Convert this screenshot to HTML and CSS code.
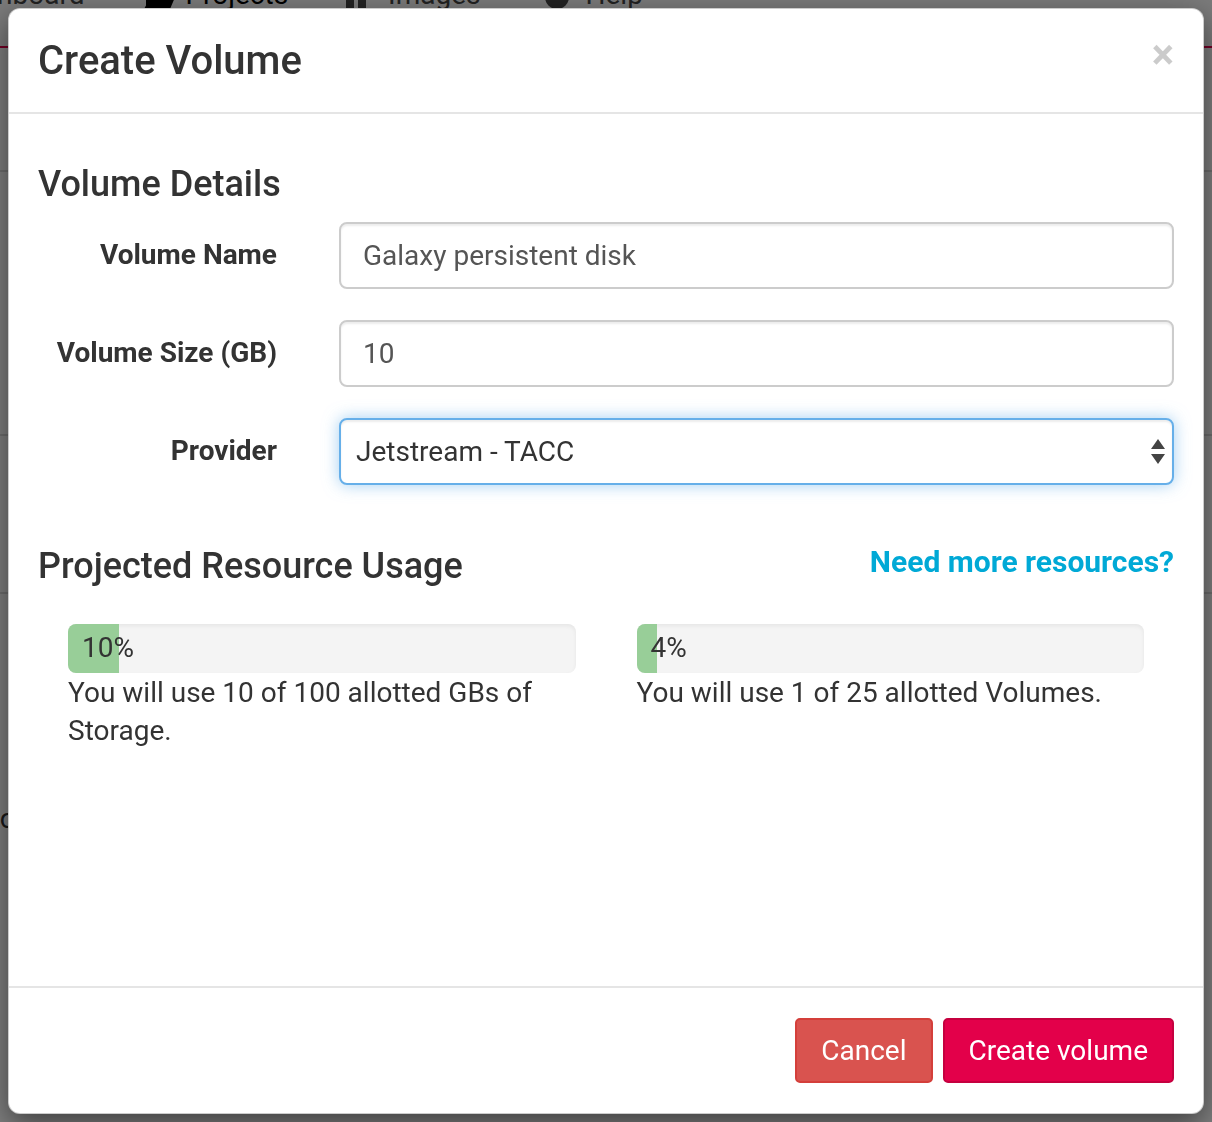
FILE: index.html
```html
<!DOCTYPE html>
<html lang="en">
<head>
<meta charset="utf-8">
<title>Create Volume</title>
<link rel="stylesheet" href="styles.css">
</head>
<body>
  <div class="page">
    <nav class="topnav">
      <a class="nav-item">Dashboard</a>
      <a class="nav-item active">
        <svg class="nav-icon" width="32" height="32" viewBox="0 0 32 32"><path d="M2 8h10l3 3h13v5H8L2 28z M8 16h24l-6 14H0z" fill="#000"/></svg>
        Projects
      </a>
      <a class="nav-item img-item">
        <svg class="nav-icon" width="22" height="32" viewBox="0 0 22 32"><rect x="0" y="2" width="8" height="28" fill="#444"/><rect x="12" y="2" width="8" height="28" fill="#444"/></svg>
        Images
      </a>
      <a class="nav-item help-item">
        <svg class="nav-icon" width="24" height="32" viewBox="0 0 24 32"><circle cx="12" cy="18" r="12" fill="#444"/></svg>
        Help
      </a>
    </nav>
    <div class="page-content">
      <div class="row-block r1"></div>
      <div class="row-block r2"></div>
      <div class="row-block r3"></div>
      <p class="bg-text t1">po, about your project</p>
      <p class="bg-text t2">The volume</p>
      <p class="bg-text t3">At last.</p>
    </div>
  </div>

  <div class="backdrop"></div>

  <div class="modal" role="dialog" aria-labelledby="modal-title">
    <div class="modal-header">
      <h4 class="modal-title" id="modal-title">Create Volume</h4>
      <button class="close" type="button" aria-label="Close">×</button>
    </div>

    <div class="modal-body">
      <h3 class="section-title">Volume Details</h3>
      <form class="form-horizontal">
        <div class="form-group">
          <label class="control-label" for="vol-name">Volume Name</label>
          <input class="form-control" id="vol-name" type="text" value="Galaxy persistent disk">
        </div>
        <div class="form-group">
          <label class="control-label" for="vol-size">Volume Size (GB)</label>
          <input class="form-control" id="vol-size" type="text" value="10">
        </div>
        <div class="form-group">
          <label class="control-label" for="vol-provider">Provider</label>
          <div class="select-wrap">
            <select class="form-control select-focus" id="vol-provider">
              <option>Jetstream - TACC</option>
            </select>
            <svg class="select-arrows" width="14" height="26" viewBox="0 0 14 26"><path d="M7 0L14 10H0z M0 15h14L7 25z" fill="#444"/></svg>
          </div>
        </div>
      </form>

      <div class="usage-head">
        <h3 class="section-title usage-title">Projected Resource Usage</h3>
        <a class="more-link" href="#">Need more resources?</a>
      </div>

      <div class="usage-row">
        <div class="usage-col">
          <div class="progress">
            <div class="progress-bar" style="width:10%"></div>
            <span class="progress-label">10%</span>
          </div>
          <p class="usage-text">You will use 10 of 100 allotted GBs of Storage.</p>
        </div>
        <div class="usage-col">
          <div class="progress">
            <div class="progress-bar" style="width:4%"></div>
            <span class="progress-label">4%</span>
          </div>
          <p class="usage-text">You will use 1 of 25 allotted Volumes.</p>
        </div>
      </div>
    </div>

    <div class="modal-footer">
      <button class="btn btn-cancel" type="button">Cancel</button>
      <button class="btn btn-primary" type="button">Create volume</button>
    </div>
  </div>
</body>
</html>
```

FILE: styles.css
```css
* { box-sizing: border-box; }

html, body {
  margin: 0;
  padding: 0;
}

body {
  width: 1212px;
  height: 1122px;
  overflow: hidden;
  position: relative;
  font-family: Roboto, "Helvetica Neue", Arial, sans-serif;
  color: #333;
  background: #fff;
}

/* ---------- background page ---------- */
.page {
  height: 100%;
}

.topnav {
  display: flex;
  align-items: flex-start;
  height: 73px;
  margin-top: -25px;
  margin-left: -51px;
  background: #f6f6f6;
  border-bottom: 2px solid #e4004a;
  font-size: 28px;
  line-height: 40px;
}

.nav-item {
  display: flex;
  align-items: flex-end;
  gap: 9px;
  color: #444;
  padding: 0 0 0 60px;
}

.nav-item:first-child { padding-left: 0; }

.img-item { gap: 20px; padding-left: 58px; }
.help-item { gap: 17px; padding-left: 64px; }

.nav-item.active {
  color: #000;
}

.nav-icon {
  flex: none;
  margin-bottom: 4px;
}

.page-content {
  margin-left: -30px;
}

.row-block {
  border-bottom: 2px solid #ddd;
}
.r1 { height: 124px; }
.r2 { height: 264px; }
.r3 { height: 158px; }

.bg-text {
  margin: 0;
  font-size: 28px;
  line-height: 40px;
}
.t1 { margin-top: 205px; margin-left: 14px; }
.t2 { margin-top: 105px; margin-left: -120px; }
.t3 { margin-top: 110px; margin-left: -80px; }

.backdrop {
  position: fixed;
  inset: 0;
  background: rgba(0, 0, 0, 0.5);
}

/* ---------- modal ---------- */
.modal {
  position: absolute;
  left: 8px;
  top: 8px;
  width: 1196px;
  height: 1106px;
  display: flex;
  flex-direction: column;
  background: #fff;
  border: 1px solid rgba(0, 0, 0, 0.2);
  border-radius: 12px;
  box-shadow: 0 10px 30px rgba(0, 0, 0, 0.5);
}

.modal-header {
  display: flex;
  justify-content: space-between;
  align-items: flex-start;
  padding: 30px 29px 29px;
  border-bottom: 2px solid #e5e5e5;
}

.modal-title {
  margin: 0;
  font-size: 40px;
  line-height: 44px;
  font-weight: 500;
  color: #333;
}

.close {
  margin: -5px 0 0;
  padding: 0;
  border: 0;
  background: none;
  font-family: inherit;
  font-size: 42px;
  line-height: 42px;
  font-weight: 700;
  color: #000;
  opacity: 0.2;
  cursor: pointer;
}

.modal-body {
  flex: 1;
  padding: 30px 29px;
}

.section-title {
  margin: 20px 0 18px;
  font-size: 36px;
  line-height: 40px;
  font-weight: 500;
  color: #333;
}

.form-horizontal {
  margin: 0;
}

.form-group {
  display: grid;
  grid-template-columns: 239px 1fr;
  column-gap: 62px;
  align-items: center;
  margin-bottom: 31px;
}

.form-group:last-child {
  margin-bottom: 0;
}

.control-label {
  text-align: right;
  font-size: 28px;
  line-height: 40px;
  font-weight: 700;
  color: #333;
  margin-top: -2px;
}

.form-control {
  display: block;
  width: 100%;
  height: 67px;
  padding: 0 22px;
  font-family: inherit;
  font-size: 28px;
  color: #555;
  background: #fff;
  border: 2px solid #ccc;
  border-radius: 8px;
  box-shadow: inset 0 2px 2px rgba(0, 0, 0, 0.075);
  outline: none;
}

.select-wrap {
  position: relative;
}

.select-focus {
  appearance: none;
  -webkit-appearance: none;
  padding-left: 15px;
  color: #333;
  border-color: #66afe9;
  box-shadow: inset 0 2px 2px rgba(0, 0, 0, 0.075), 0 0 16px rgba(102, 175, 233, 0.6);
}

.select-arrows {
  position: absolute;
  right: 9px;
  top: 21px;
  pointer-events: none;
}

.usage-head {
  display: flex;
  justify-content: space-between;
  align-items: flex-start;
  margin-top: 61px;
}

.usage-title {
  margin: 0;
}

.more-link {
  font-size: 30px;
  line-height: 40px;
  font-weight: 700;
  color: #00a9d6;
  text-decoration: none;
  margin-top: -4px;
}

.usage-row {
  display: grid;
  grid-template-columns: 1fr 1fr;
  column-gap: 61px;
  padding: 0 30px;
  margin-top: 38px;
}

.progress {
  position: relative;
  height: 49px;
  background: #f4f4f4;
  border-radius: 8px;
  overflow: hidden;
  box-shadow: inset 0 2px 4px rgba(0, 0, 0, 0.06);
}

.progress-bar {
  position: absolute;
  left: 0;
  top: 0;
  bottom: 0;
  background: #98ce98;
}

.progress-label {
  position: relative;
  display: block;
  padding: 4px 0 0 14px;
  font-size: 28px;
  line-height: 40px;
  color: #333;
}

.usage-text {
  margin: 0;
  font-size: 28px;
  line-height: 38px;
  color: #333;
  padding-top: 1px;
}

.modal-footer {
  display: flex;
  justify-content: flex-end;
  gap: 10px;
  padding: 30px 29px;
  border-top: 2px solid #e5e5e5;
}

.btn {
  font-family: inherit;
  font-size: 28px;
  line-height: 41px;
  padding: 10px 24px;
  border: 2px solid transparent;
  border-radius: 5px;
  color: #fff;
  cursor: pointer;
}

.btn-cancel {
  background: #d9534f;
  border-color: #d43f3a;
}

.btn-primary {
  background: #e3004a;
  border-color: #c5003f;
}
```
